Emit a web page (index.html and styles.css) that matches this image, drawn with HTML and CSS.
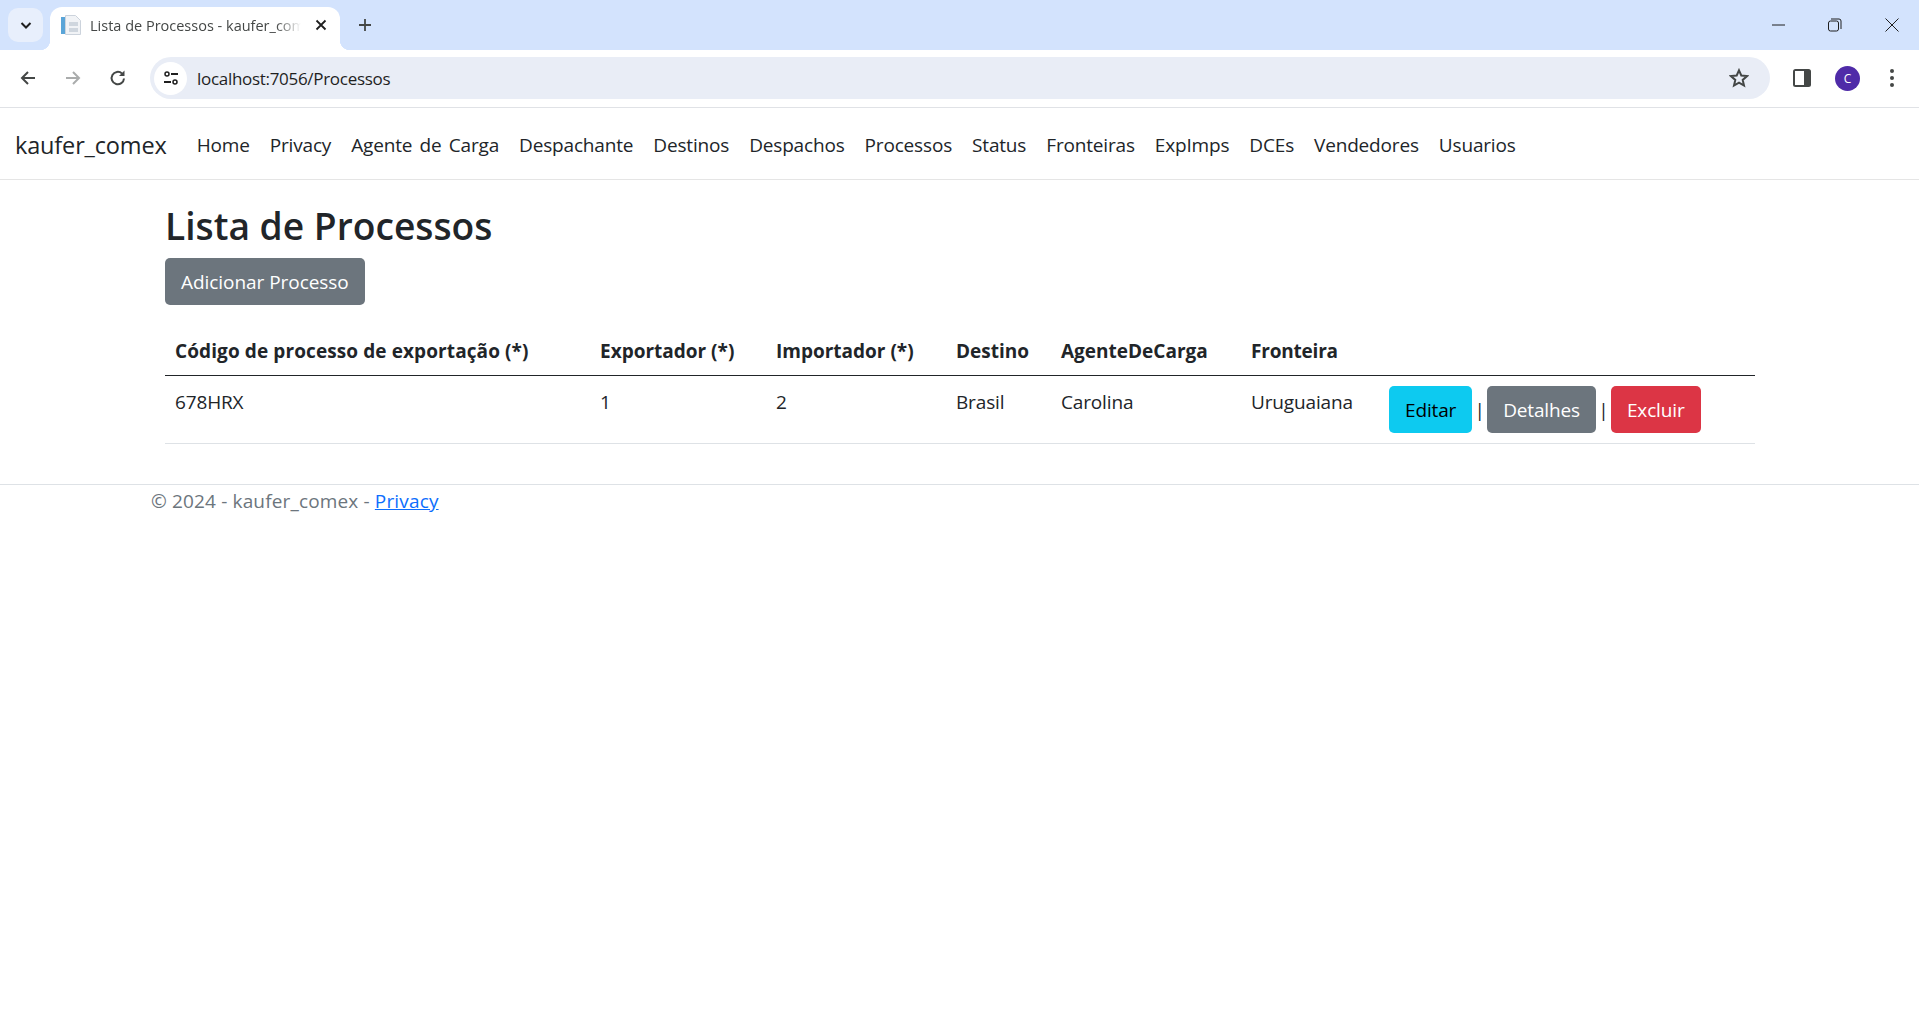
FILE: index.html
```html
<!DOCTYPE html>
<html lang="pt-BR">
<head>
  <meta charset="UTF-8" />
  <title>Lista de Processos - kaufer_comex</title>
  <link rel="stylesheet" href="styles.css">
</head>
<body>
  <div class="tabstrip">
    <div class="tab-search">
      <svg width="14" height="14" viewBox="0 0 14 14"><path d="M2.5 5 7 9.5 11.5 5" fill="none" stroke="#1f1f1f" stroke-width="2"/></svg>
    </div>
    <div class="tab">
      <svg class="favicon" width="20" height="20" viewBox="0 0 20 20">
        <rect x="0" y="2" width="4" height="17" fill="#5aa5d8"/>
        <path d="M4.500 .5h10l5 5v14h-15z" fill="#f1f3f6" stroke="#ccd3dc"/>
        <rect x="8" y="7" width="9" height="4" fill="#cfd6de"/>
        <rect x="8" y="13" width="9" height="4" fill="#cfd6de"/>
      </svg>
      <span class="tab-title">Lista de Processos - kaufer_comex</span>
      <svg class="tab-close" width="12" height="12" viewBox="0 0 12 12"><path d="M1.500 1.500l9 9M10.500 1.500l-9 9" stroke="#1f1f1f" stroke-width="1.800"/></svg>
    </div>
    <svg class="new-tab" width="14" height="14" viewBox="0 0 14 14"><path d="M7 1v12M1 7h12" stroke="#444746" stroke-width="1.800"/></svg>
    <div class="window-btns">
      <svg width="14" height="14" viewBox="0 0 14 14"><path d="M1 7h13" stroke="#1f1f1f"/></svg>
      <svg width="14" height="14" viewBox="0 0 14 14"><rect x=".5" y="3" width="10" height="10" rx="2" fill="none" stroke="#1f1f1f"/><path d="M3 1h8a2 2 0 0 1 2 2v8" fill="none" stroke="#1f1f1f"/></svg>
      <svg width="14" height="14" viewBox="0 0 14 14"><path d="M.5.5l13 13M13.500.5l-13 13" stroke="#1f1f1f"/></svg>
    </div>
  </div>

  <div class="toolbar">
    <svg class="tool-icon" width="18" height="18" viewBox="0 0 18 18"><path d="M16 9H3M9 3 3 9l6 6" fill="none" stroke="#444746" stroke-width="2"/></svg>
    <svg class="tool-icon" width="18" height="18" viewBox="0 0 18 18"><path d="M2 9h13M9 3l6 6-6 6" fill="none" stroke="#aaacac" stroke-width="2"/></svg>
    <svg class="tool-icon" width="18" height="18" viewBox="0 0 18 18"><path d="M15 9.500A6.200 6.200 0 1 1 13 4.500" fill="none" stroke="#444746" stroke-width="2"/><path d="M15.500 1.500v5.500H10z" fill="#444746"/></svg>
    <div class="omnibox">
      <span class="site-info">
        <svg width="16" height="16" viewBox="0 0 16 16"><circle cx="4" cy="4" r="2" fill="none" stroke="#1f1f1f" stroke-width="1.500"/><path d="M8 4h7M1 12h7" stroke="#1f1f1f" stroke-width="1.800"/><circle cx="12" cy="12" r="2" fill="none" stroke="#1f1f1f" stroke-width="1.500"/></svg>
      </span>
      <span class="url">localhost:7056/Processos</span>
      <svg class="star" width="20" height="20" viewBox="0 0 20 20"><path d="M10 2.300l2.300 5.200 5.700.6-4.300 3.800 1.300 5.600-5-2.900-5 2.900 1.300-5.600L2 8.100l5.700-.6z" fill="none" stroke="#444746" stroke-width="2"/></svg>
    </div>
    <svg class="side-panel" width="18" height="18" viewBox="0 0 18 18"><rect width="18" height="18" rx="2.500" fill="#444746"/><rect x="2" y="2" width="9" height="14" fill="#fff"/></svg>
    <span class="avatar">C</span>
    <svg class="dots" width="6" height="20" viewBox="0 0 6 20"><circle cx="3" cy="3" r="2" fill="#444746"/><circle cx="3" cy="10" r="2" fill="#444746"/><circle cx="3" cy="17" r="2" fill="#444746"/></svg>
  </div>

  <nav class="navbar">
    <a class="brand" href="#">kaufer_comex</a>
    <ul class="nav-list">
      <li><a href="#">Home</a></li>
      <li><a href="#">Privacy</a></li>
      <li><a href="#">Agente de Carga</a></li>
      <li><a href="#">Despachante</a></li>
      <li><a href="#">Destinos</a></li>
      <li><a href="#">Despachos</a></li>
      <li><a href="#">Processos</a></li>
      <li><a href="#">Status</a></li>
      <li><a href="#">Fronteiras</a></li>
      <li><a href="#">ExpImps</a></li>
      <li><a href="#">DCEs</a></li>
      <li><a href="#">Vendedores</a></li>
      <li><a href="#">Usuarios</a></li>
    </ul>
  </nav>

  <main class="container">
    <h1>Lista de Processos</h1>
    <a class="btn btn-secondary" href="#">Adicionar Processo</a>
    <table class="table">
      <thead>
        <tr>
          <th class="col-codigo">Código de processo de exportação (*)</th>
          <th class="col-exp">Exportador (*)</th>
          <th class="col-imp">Importador (*)</th>
          <th class="col-destino">Destino</th>
          <th class="col-agente">AgenteDeCarga</th>
          <th class="col-fronteira">Fronteira</th>
          <th></th>
        </tr>
      </thead>
      <tbody>
        <tr>
          <td>678HRX</td>
          <td>1</td>
          <td>2</td>
          <td>Brasil</td>
          <td>Carolina</td>
          <td>Uruguaiana</td>
          <td class="actions">
            <a class="btn btn-info" href="#">Editar</a><span class="pipe">|</span><a class="btn btn-secondary" href="#">Detalhes</a><span class="pipe">|</span><a class="btn btn-danger" href="#">Excluir</a>
          </td>
        </tr>
      </tbody>
    </table>
  </main>

  <footer class="footer">
    <div class="footer-inner">© 2024 - kaufer_comex - <a href="#">Privacy</a></div>
  </footer>
</body>
</html>
```

FILE: styles.css
```css
* {
  box-sizing: border-box;
}

body {
  margin: 0;
  font-family: "Open Sans", "Noto Sans", Arial, sans-serif;
  font-size: 19px;
  color: #212529;
  background-color: #fff;
}

svg {
  flex: none;
  display: block;
}

/* browser chrome */
.tabstrip {
  display: flex;
  align-items: flex-end;
  height: 50px;
  background-color: #d3e3fd;
}

.tab-search {
  display: flex;
  align-items: center;
  justify-content: center;
  width: 35px;
  height: 34px;
  margin: 0 7px 8px 8px;
  border-radius: 10px;
  background-color: #e8effc;
}

.tab {
  position: relative;
  display: flex;
  align-items: center;
  width: 290px;
  height: 43px;
  padding: 0 13px 7px 11px;
  background-color: #fff;
  border-radius: 12px 12px 0 0;
}

.tab::before,
.tab::after {
  content: "";
  position: absolute;
  bottom: 0;
  width: 10px;
  height: 10px;
}

.tab::before {
  left: -10px;
  background: radial-gradient(circle at 0 0, #d3e3fd 10px, #fff 10.5px);
}

.tab::after {
  right: -10px;
  background: radial-gradient(circle at 100% 0, #d3e3fd 10px, #fff 10.5px);
}

.favicon {
  margin-right: 9px;
}

.tab-title {
  flex: 1;
  min-width: 0;
  overflow: hidden;
  white-space: nowrap;
  font-size: 14.5px;
  color: #444746;
  -webkit-mask-image: linear-gradient(90deg, #000 88%, transparent);
  mask-image: linear-gradient(90deg, #000 88%, transparent);
}

.tab-close {
  margin-left: 14px;
}

.new-tab {
  margin: 0 0 18px 18px;
}

.window-btns {
  display: flex;
  gap: 43px;
  margin: 0 20px 11px auto;
  align-self: flex-end;
  padding-bottom: 7px;
}

.toolbar {
  display: flex;
  align-items: center;
  height: 58px;
  background-color: #fff;
  border-bottom: 1px solid #e0e2e6;
  border-radius: 12px 12px 0 0;
  padding-bottom: 1px;
}

.tool-icon {
  margin-left: 19px;
  margin-right: 8px;
}

.omnibox {
  display: flex;
  align-items: center;
  width: 1620px;
  height: 42px;
  margin-left: 15px;
  padding: 0 21px 0 4px;
  border-radius: 21px;
  background-color: #e9edf6;
}

.site-info {
  display: flex;
  align-items: center;
  justify-content: center;
  width: 33px;
  height: 33px;
  border-radius: 50%;
  background-color: #fff;
}

.url {
  flex: 1;
  margin-left: 10px;
  font-size: 17px;
  letter-spacing: -0.3px;
  color: #1f1f1f;
}

.side-panel {
  margin-left: 23px;
}

.avatar {
  display: flex;
  align-items: center;
  justify-content: center;
  width: 25px;
  height: 25px;
  margin-left: 24px;
  border-radius: 50%;
  background-color: #4f2ba8;
  color: #fff;
  font-size: 12px;
}

.dots {
  margin-left: 29px;
}

/* page */
.navbar {
  display: flex;
  align-items: center;
  height: 72px;
  padding: 2px 0 0 15px;
  border-bottom: 1px solid #e5e5e5;
}

.brand {
  margin-right: 20px;
  font-size: 23.5px;
  letter-spacing: -0.15px;
  color: #212529;
  text-decoration: none;
}

.nav-list {
  display: flex;
  gap: 20px;
  margin: 0;
  padding: 0 0 0 10px;
  list-style: none;
  letter-spacing: -0.17px;
  word-spacing: 2.5px;
}

.nav-list a {
  color: #212529;
  text-decoration: none;
}

.container {
  padding: 20px 164px 0 165px;
}

h1 {
  margin: 0 0 6px;
  font-size: 37.2px;
  font-weight: 600;
  line-height: 52px;
}

.btn {
  display: inline-block;
  height: 47px;
  padding: 1px 16px 0;
  border-radius: 5px;
  line-height: 46px;
  letter-spacing: -0.05px;
  text-decoration: none;
  color: #fff;
}

.btn-secondary {
  background-color: #6c757d;
}

.btn-info {
  background-color: #0dcaf0;
  color: #000;
}

.btn-danger {
  background-color: #dc3545;
}

.table {
  width: 100%;
  margin-top: 21px;
  border-collapse: collapse;
  table-layout: fixed;
}

.table th {
  height: 49px;
  padding: 2px 10px 0;
  text-align: left;
  white-space: nowrap;
  border-bottom: 1px solid #212529;
}

.table td {
  height: 68px;
  padding: 13px 10px 7px;
  vertical-align: top;
  letter-spacing: -0.15px;
  border-bottom: 1px solid #dee2e6;
}

.col-codigo { width: 425px; letter-spacing: 0.1px; }
.col-exp { width: 176px; }
.col-imp { width: 180px; }
.col-destino { width: 105px; }
.col-agente { width: 190px; }
.col-fronteira { width: 138px; letter-spacing: -0.2px; }

.table .actions {
  padding-top: 10px;
  white-space: nowrap;
}

.actions .btn {
  letter-spacing: -0.15px;
}

.pipe {
  display: inline-block;
  width: 15px;
  text-align: center;
}

.footer {
  margin-top: 40px;
  border-top: 1px solid #dee2e6;
  color: #6c757d;
}

.footer-inner {
  padding: 1px 0 0 151px;
  line-height: 30px;
  letter-spacing: 0.15px;
}

.footer-inner a {
  color: #0d6efd;
}
```
